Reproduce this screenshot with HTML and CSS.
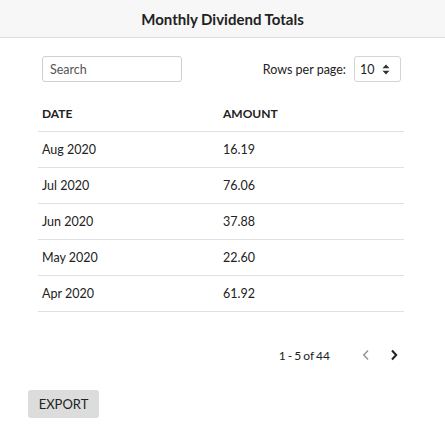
FILE: index.html
```html
<!DOCTYPE html>
<html>
<head>
<meta charset="utf-8">
<link rel="stylesheet" href="styles.css">
</head>
<body>
<header class="header">Monthly Dividend Totals</header>
<main class="content">
  <div class="toolbar">
    <div class="search">Search</div>
    <div class="rows">
      <span class="rows-label">Rows per page:</span>
      <div class="select">
        <span>10</span>
        <svg class="sort" width="8" height="11" viewBox="0 0 8 11"><path d="M4 0.5 L7.5 4.3 H0.5 Z M4 10.5 L7.5 6.7 H0.5 Z" fill="#333"/></svg>
      </div>
    </div>
  </div>
  <div class="table">
    <div class="row head"><div class="cell">DATE</div><div class="cell">AMOUNT</div></div>
    <div class="row"><div class="cell">Aug 2020</div><div class="cell">16.19</div></div>
    <div class="row"><div class="cell">Jul 2020</div><div class="cell">76.06</div></div>
    <div class="row"><div class="cell">Jun 2020</div><div class="cell">37.88</div></div>
    <div class="row"><div class="cell">May 2020</div><div class="cell">22.60</div></div>
    <div class="row"><div class="cell">Apr 2020</div><div class="cell">61.92</div></div>
  </div>
  <div class="pager">
    <span class="range">1 - 5 of 44</span>
    <svg class="chev prev" width="8" height="12" viewBox="0 0 8 12"><path d="M6 1.5 L1.8 6 L6 10.5" fill="none" stroke="#9a9a9a" stroke-width="1.6"/></svg>
    <svg class="chev next" width="8" height="12" viewBox="0 0 8 12"><path d="M2 1.5 L6.2 6 L2 10.5" fill="none" stroke="#222" stroke-width="2"/></svg>
  </div>
</main>
<div class="footer"><button class="export">EXPORT</button></div>
</body>
</html>
```
FILE: styles.css
```css
html, body {
  margin: 0;
  padding: 0;
  background: #ffffff;
  font-family: Lato, "Open Sans", sans-serif;
  color: #222222;
}
.header {
  height: 37px;
  background: #f7f7f7;
  border-bottom: 1px solid #dcdcdc;
  display: flex;
  align-items: center;
  justify-content: center;
  font-weight: 700;
  font-size: 15px;
  color: #222222;
}
.content {
  padding: 0 41px 0 38px;
}
.toolbar {
  margin-top: 18px;
  display: flex;
  justify-content: space-between;
  align-items: center;
}
.search {
  margin-left: 4px;
  box-sizing: border-box;
  width: 140px;
  height: 26px;
  border: 1px solid #cfcfcf;
  border-radius: 3px;
  padding-left: 7px;
  display: flex;
  align-items: center;
  font-size: 12.5px;
  color: #555555;
}
.rows {
  display: flex;
  align-items: center;
  margin-right: 3px;
}
.rows-label {
  font-size: 12.5px;
  color: #222222;
  margin-right: 8px;
}
.select {
  box-sizing: border-box;
  width: 47px;
  height: 26px;
  border: 1px solid #d4d4d4;
  border-radius: 3px;
  display: flex;
  align-items: center;
  padding-left: 5px;
  gap: 7px;
  font-size: 12.5px;
}
.table {
  margin-top: 14px;
}
.row {
  display: grid;
  grid-template-columns: 181px 1fr;
  height: 36px;
  align-items: center;
  border-bottom: 1px solid #dbe0e6;
  box-sizing: border-box;
  font-size: 12.5px;
}
.row.head {
  font-weight: 700;
  font-size: 12px;
}
.cell {
  padding-left: 4px;
}
.pager {
  display: flex;
  align-items: center;
  justify-content: flex-end;
  height: 44px;
  margin-top: 21px;
  font-size: 12px;
  padding-right: 6px;
}
.range {
  margin-right: 32px;
  word-spacing: -1px;
}
.chev.prev {
  margin-right: 20px;
}
.footer {
  padding-left: 28px;
  margin-top: 13px;
}
.export {
  width: 71px;
  height: 28px;
  border: none;
  border-radius: 3px;
  background: #dcdcdc;
  font-family: Lato, "Open Sans", sans-serif;
  font-size: 13px;
  color: #222222;
  padding: 0;
}
```
